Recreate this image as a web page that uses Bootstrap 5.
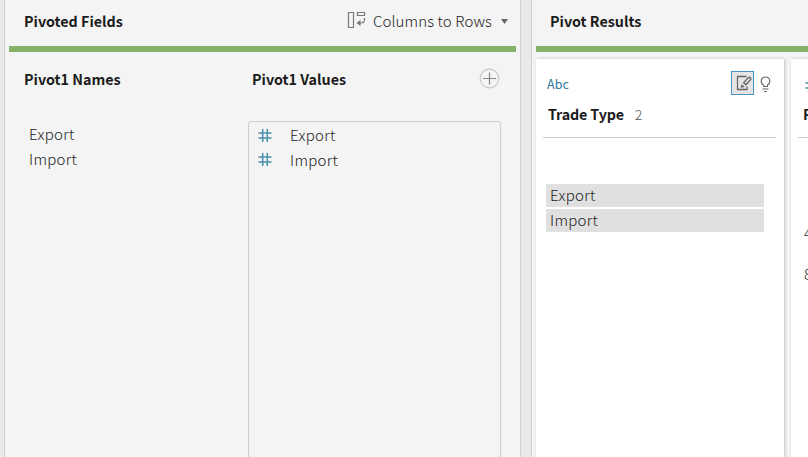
<!DOCTYPE html>
<html lang="en">
<head>
<meta charset="utf-8">
<meta name="viewport" content="width=device-width, initial-scale=1">
<title>Pivot</title>
<link href="https://cdn.jsdelivr.net/npm/bootstrap@5.3.0/dist/css/bootstrap.min.css" rel="stylesheet">
<style>
body{background:#e9e9e9;font-family:"Noto Sans CJK SC","Open Sans",sans-serif;font-size:15px;font-weight:300;line-height:25px;color:#222;letter-spacing:.3px}
.pane{background:#f4f4f4;border:solid #cfcfcf;border-width:0 1px;padding:0 4px}
.pane-left{width:517px;margin-left:4px}
.pane-right{width:277px;margin-left:10px;border-right:0;padding-right:0}
.pane-head{height:52px;border-bottom:6px solid #85b169;padding:8px 8px 0 15px}
.pane-right .pane-head{padding-left:14px}
.mode{letter-spacing:.13px}
.mode-icon{margin:3px 7px 0 0}
.caret{margin:11px 0 0 9px}
.ttl{color:#1b1b1b;font-weight:700;font-size:14.3px;letter-spacing:0;white-space:nowrap}
.names-col{width:239px;padding:14px 0 0 15px}
.names-list{margin-top:30px;padding-left:5px}
.values-col{width:253px;padding-top:14px}
.values-head{padding:0 1px 0 4px;height:25px}
.add-icon{margin-top:2px}
.values-box{margin-top:30px;border:1px solid #cfcfcf;border-bottom:0;border-radius:4px 4px 0 0;padding:0 0 0 9px}
.entry{height:25px}
.entry svg{margin:7px 18px 0 0}
.entry:last-child svg{margin-top:6px}
.cards{gap:7px;padding-top:7px}
.field{background:#fff;box-shadow:1px 0 3px rgba(0,0,0,.22);flex:none}
.field-main{width:248px}
.field-next{width:100px}
.field-top{height:42px;padding:12px 13px 0 11px}
.field-next .field-top{padding:12px 0 0 14px}
.kind{color:#31789b;font-size:12.5px;letter-spacing:.1px;font-weight:400}
.edit-btn{width:23px;height:24px;background:#e5e5e5;border:1px solid #4596c6;margin-right:6px}
.edit-btn svg{margin-left:3px}
.bulb{margin-top:5px}
.field-name{height:37px;margin:0 8px 0 7px;padding-left:5px;border-bottom:1px solid #cfcfcf}
.field-main .ttl{letter-spacing:-.15px}
.count{color:#555;font-size:13.5px;margin-left:11px}
.vals{padding:46px 20px 0 10px;gap:2px}
.val{background:#e0e0e0;height:23px;line-height:22px;padding-left:4px}
.nums{padding:74px 0 0 13px;line-height:41px}
</style>
</head>
<body class="vh-100 overflow-hidden">
<div class="d-flex h-100">
  <section class="pane pane-left d-flex flex-column flex-shrink-0">
    <header class="pane-head d-flex flex-shrink-0">
      <span class="ttl">Pivoted Fields</span>
      <span class="ms-auto d-flex">
        <svg width="19" height="18" viewBox="0 0 19 18" class="mode-icon" fill="none" stroke="#777" stroke-width="1.2"><path d="M1.5 1.5h5v15h-5zM10.500 1.500h7v3h-7zM17.500 7v1.500c0 2.200-1.400 3.500-3.500 3.500h-2"/><path d="M9.500 12l4-3v6z" fill="#777" stroke="none"/></svg>
        <span class="mode">Columns to Rows</span>
        <svg width="7" height="6" class="caret"><path d="M0 0h7L3.500 5z" fill="#666"/></svg>
      </span>
    </header>
    <div class="d-flex flex-grow-1">
      <div class="names-col">
        <div class="ttl">Pivot1 Names</div>
        <div class="names-list"><div>Export</div><div>Import</div></div>
      </div>
      <div class="values-col d-flex flex-column">
        <div class="values-head d-flex justify-content-between">
          <span class="ttl">Pivot1 Values</span>
          <svg class="add-icon" width="21" height="21" viewBox="0 0 21 21" fill="none"><circle cx="10.500" cy="10.500" r="9.300" stroke="#c9c9c9" stroke-width="1.200"/><path d="M4 10.500h13M10.500 4.500v12" stroke="#888" stroke-width="1.200"/></svg>
        </div>
        <div class="values-box flex-grow-1">
          <div class="entry d-flex"><svg width="14" height="13" viewBox="0 0 14 13" stroke="#4a8fab" stroke-width="1.500"><path d="M.5 4h13M.5 9h13M4.700 0v13M9.300 0v13"/></svg><span>Export</span></div>
          <div class="entry d-flex"><svg width="14" height="13" viewBox="0 0 14 13" stroke="#4a8fab" stroke-width="1.500"><path d="M.5 4h13M.5 9h13M4.700 0v13M9.300 0v13"/></svg><span>Import</span></div>
        </div>
      </div>
    </div>
  </section>
  <section class="pane pane-right d-flex flex-column overflow-hidden">
    <header class="pane-head flex-shrink-0"><span class="ttl">Pivot Results</span></header>
    <div class="cards d-flex flex-grow-1">
      <div class="field field-main">
        <div class="field-top d-flex">
          <span class="kind me-auto">Abc</span>
          <span class="edit-btn d-flex justify-content-center align-items-center"><svg width="16" height="16" viewBox="0 0 16 16" fill="none" stroke="#666" stroke-width="1.300"><path d="M10.500 1.500h-9v13h9.500v-3M7.600 7.700l4.600-5c1.200-1.200 3.400.700 2.300 2.100l-4.600 5zM6 10.300l1.400 1.200-1.900.6z"/></svg></span>
          <svg width="11" height="17" viewBox="0 0 11 17" class="bulb" fill="none" stroke="#666" stroke-width="1.200"><path d="M3.700 10.500V9.300C2.200 8.500 1.200 7.200 1.200 5.300a4.300 4.300 0 0 1 8.600 0c0 1.900-1 3.200-2.500 4v1.200zM2.500 13h6M4 15.500h3"/></svg>
        </div>
        <div class="field-name"><span class="ttl">Trade Type</span><span class="count">2</span></div>
        <div class="vals d-flex flex-column"><div class="val">Export</div><div class="val">Import</div></div>
      </div>
      <div class="field field-next">
        <div class="field-top"><svg width="14" height="13" viewBox="0 0 14 13" stroke="#4a8fab" stroke-width="1.500"><path d="M.5 4h13M.5 9h13M4.700 0v13M9.300 0v13"/></svg></div>
        <div class="field-name"><span class="ttl">Pivot1 Values</span></div>
        <div class="nums"><div>4</div><div>8</div></div>
      </div>
    </div>
  </section>
</div>
<script src="https://cdn.jsdelivr.net/npm/bootstrap@5.3.0/dist/js/bootstrap.bundle.min.js"></script>
</body>
</html>
